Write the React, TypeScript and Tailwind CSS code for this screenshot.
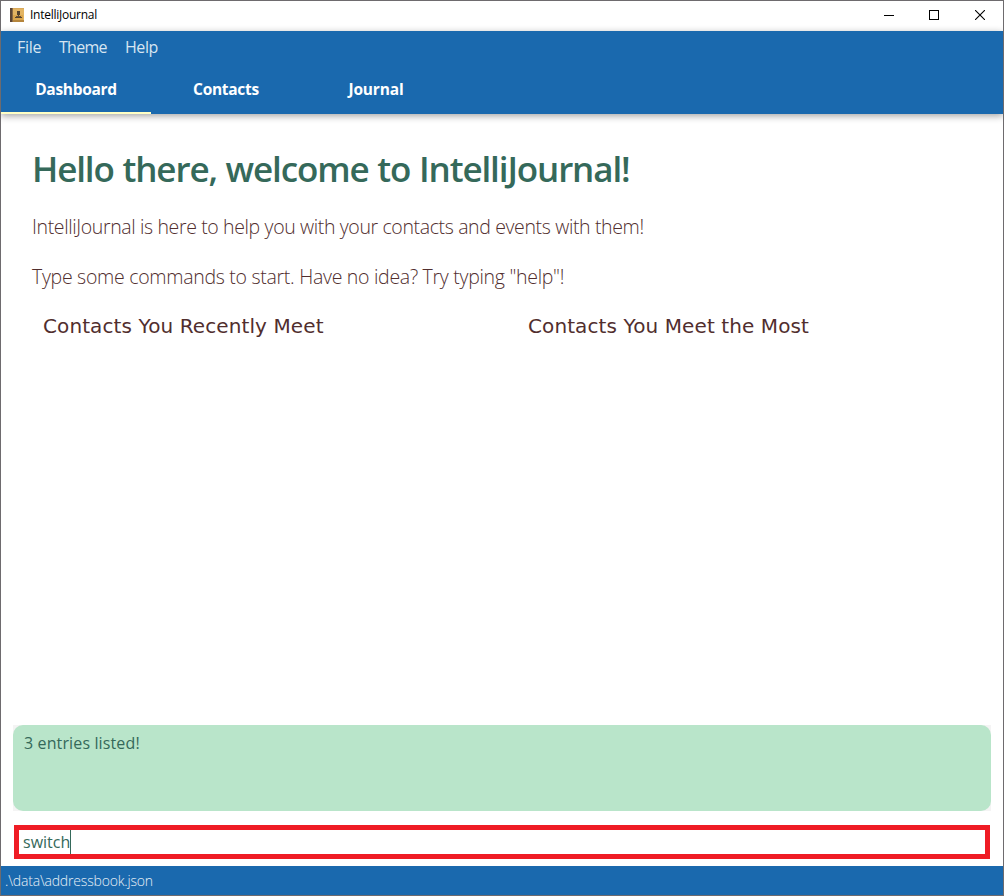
import React from "react";

function BookIcon() {
  return (
    <svg width="14" height="14" viewBox="0 0 14 14" className="shrink-0" shapeRendering="crispEdges">
      <rect width="14" height="14" fill="#a87d3c" />
      <rect x="3" y="0" width="11" height="12" fill="#e3b462" />
      <rect x="3" y="0" width="11" height="1" fill="#d9a95a" />
      <rect x="3" y="7" width="10" height="5" fill="#dba64c" />
      <rect x="0" y="0" width="2" height="14" fill="#5a4434" />
      <rect x="2" y="0" width="1" height="14" fill="#8a6a45" />
      <rect x="3" y="12" width="11" height="2" fill="#b5853c" />
      <rect x="7" y="3" width="3" height="4" fill="#55432f" />
      <rect x="8" y="7" width="1" height="1" fill="#55432f" />
      <rect x="6" y="8" width="5" height="1" fill="#6b5232" />
      <rect x="5" y="9" width="7" height="1" fill="#55432f" />
    </svg>
  );
}

function TitleBar() {
  return (
    <div className="flex h-[30px] shrink-0 items-center bg-white pb-[2px] pl-[9px] pr-px">
      <BookIcon />
      <span className="ml-[6px] flex-1 text-[12px] leading-[28px] tracking-[-0.26px] text-black">IntelliJournal</span>
      <div className="flex">
        <span className="flex w-[46px] justify-center">
          <svg width="10" height="10" viewBox="0 0 10 10" shapeRendering="crispEdges">
            <path d="M0 5.5H10" stroke="#000" />
          </svg>
        </span>
        <span className="flex w-[44px] justify-center">
          <svg width="10" height="10" viewBox="0 0 10 10" shapeRendering="crispEdges">
            <path d="M.5 .5H9.5V9.5H.5Z" fill="none" stroke="#000" />
          </svg>
        </span>
        <span className="flex w-[46px] justify-center pl-px">
          <svg width="10" height="10" viewBox="0 0 10 10">
            <path d="M0 0L10 10M10 0L0 10" stroke="#000" strokeWidth="1.1" />
          </svg>
        </span>
      </div>
    </div>
  );
}

function Header() {
  return (
    <header className="relative z-10 h-[83px] shrink-0 bg-[#1a69ae] shadow-[0_2px_7px_rgba(0,0,0,0.36)]">
      <nav className="flex h-[34px] gap-[18px] pl-4 text-[16px] leading-[33px] text-[#d7e5f1]">
        <span className="w-6 whitespace-nowrap tracking-[-0.3px]">File</span>
        <span className="w-12 whitespace-nowrap tracking-[-0.7px]">Theme</span>
        <span className="whitespace-nowrap tracking-[-0.45px]">Help</span>
      </nav>
      <div className="flex h-[49px] text-center text-[15.5px] font-bold leading-[48px] tracking-[-0.3px] text-white">
        <span className="w-[150px] border-b-2 border-[#ffffc4]">Dashboard</span>
        <span className="w-[150px]">Contacts</span>
        <span className="w-[150px] tracking-[-0.15px]">Journal</span>
      </div>
    </header>
  );
}

export default function App() {
  return (
    <div className="flex h-[896px] w-[1004px] flex-col overflow-hidden border border-[#6e6b6e] bg-white font-['Open_Sans','Noto_Sans',sans-serif]">
      <TitleBar />
      <Header />
      <main className="flex flex-1 flex-col">
        <div className="pl-[31px] pt-[31px]">
          <h1 className="h-[57px] whitespace-nowrap text-[35px] font-semibold leading-[48px] tracking-[-1.12px] text-[#35695a] [word-spacing:0.8px]">
            Hello there, welcome to IntelliJournal!
          </h1>
          <p className="h-[50px] whitespace-nowrap text-[19.5px] font-light leading-[50px] tracking-[-0.37px] text-[#512e2e]">
            IntelliJournal is here to help you with your contacts and events with them!
          </p>
          <p className="h-[50px] whitespace-nowrap text-[19.5px] font-light leading-[50px] tracking-[-0.29px] text-[#512e2e]">
            Type some commands to start. Have no idea? Try typing "help"!
          </p>
        </div>
        <div className="flex pl-[42px] pt-[9px] font-['DejaVu_Sans',sans-serif] text-[20px] leading-[30px] tracking-[0.1px] text-[#512e2e]">
          <h2 className="w-[485px]">Contacts You Recently Meet</h2>
          <h2>Contacts You Meet the Most</h2>
        </div>
        <div className="mx-3 mt-auto h-[86px] bg-[#f4f4f4]">
          <div className="h-full rounded-[10px] bg-[#b9e5ca] pl-[11px] pt-[5px] text-[16px] leading-[26px] tracking-[0.13px] text-[#35695a]">
            3 entries listed!
          </div>
        </div>
        <div className="mb-[7px] ml-[13px] mr-[13px] mt-[14px] flex h-[34px] items-center border-[5px] border-[#ef1c25] pl-1 text-[16px] text-[#35695a]">
          <span className="leading-6">switch</span>
          <span className="h-6 w-px bg-[#35695a]" />
        </div>
      </main>
      <footer className="h-[29px] shrink-0 bg-[#1a69ae] pl-1 text-[14px] font-light leading-[29px] tracking-[-0.18px] text-[#e8f0f7]">
        .\data\addressbook.json
      </footer>
    </div>
  );
}
